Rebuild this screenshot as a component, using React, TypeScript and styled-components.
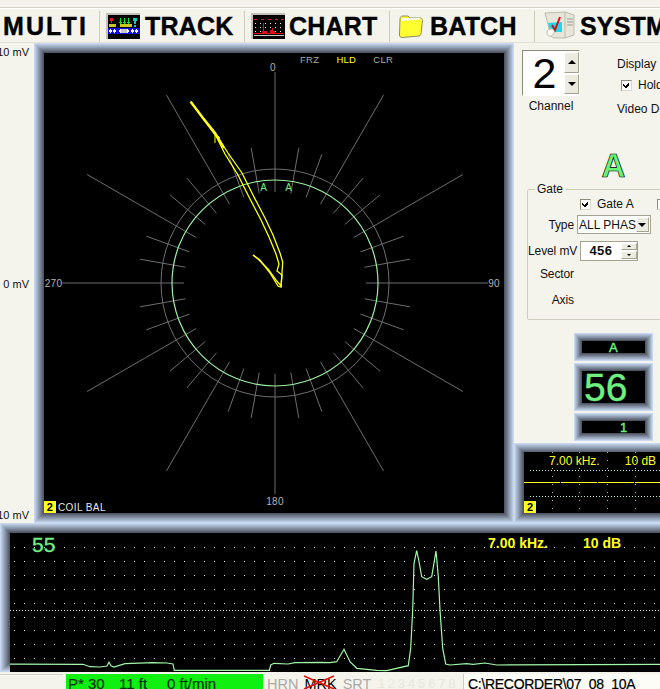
import React from 'react'
import styled, { createGlobalStyle } from 'styled-components'

const CREAM = '#f5f4ec'
const GREEN = '#70f080'
const YELLOW = '#ffff20'

const mix = (t: number) => {
  // light blue at the outer edge, slate at the inner edge
  const from = [200, 216, 240]
  const to = [78, 86, 100]
  const c = from.map((v, i) => Math.round(v + (to[i] - v) * t))
  return `rgb(${c.join(',')})`
}

const bevel = (size: number) =>
  Array.from({ length: size }, (_, i) => `inset 0 0 0 ${i + 1}px ${mix(i / (size - 1))}`).join(', ')

const GlobalStyle = createGlobalStyle`
  html, body {
    margin: 0;
    padding: 0;
    background: ${CREAM};
  }
  * {
    box-sizing: border-box;
  }
`

const Page = styled.div`
  width: 660px;
  height: 689px;
  overflow: hidden;
  display: flex;
  flex-direction: column;
  background: ${CREAM};
  font-family: 'Liberation Sans', Arial, sans-serif;
  color: #111;
`

const Toolbar = styled.div`
  height: 43px;
  flex: none;
  display: flex;
  align-items: center;
  padding-top: 10px;
  padding-bottom: 2px;
  white-space: nowrap;
  position: relative;
  border-top: 2px solid transparent;
  background: linear-gradient(#f5f4ec 0 5px, #d6d3c6 5px 6px, #fff 6px 7px, ${CREAM} 7px);
  border-bottom: 1px solid #e4e2d6;
`

const ToolItem = styled.div<{ $width: number; $pad: number; $gap: number }>`
  width: ${(p) => p.$width}px;
  height: 31px;
  flex: none;
  display: flex;
  align-items: center;
  gap: ${(p) => p.$gap}px;
  padding-left: ${(p) => p.$pad}px;
  border-right: 1px solid #cfccbe;
`

const ToolLabel = styled.span<{ $spacing?: number }>`
  font-size: 25px;
  font-weight: 700;
  letter-spacing: ${(p) => p.$spacing ?? 0.2}px;
  color: #000;
  -webkit-text-stroke: 0.4px #000;
`

const MainRow = styled.div`
  height: 480px;
  flex: none;
  display: flex;
`

const AxisColumn = styled.div`
  width: 34px;
  flex: none;
  display: flex;
  flex-direction: column;
  justify-content: space-between;
  align-items: flex-end;
  padding: 2px 5px 0 0;
  font-size: 11px;
  line-height: 14px;
  white-space: nowrap;
  margin-bottom: 1px;
`

const ScopePanel = styled.div`
  width: 480px;
  height: 480px;
  flex: none;
  padding: 10px;
  box-shadow: ${bevel(10)};
`

const Screen = styled.div`
  position: relative;
  width: 100%;
  height: 100%;
  background: #000;
  overflow: hidden;

  svg {
    display: block;
  }
`

const ModeRow = styled.div`
  position: absolute;
  top: 1px;
  left: 256px;
  display: flex;
  gap: 17px;
  font-size: 9.5px;
  line-height: 12px;
  letter-spacing: 0.3px;
`

const Mode = styled.span<{ $on?: boolean }>`
  color: ${(p) => (p.$on ? YELLOW : '#a8a8a8')};
`

const ChannelTag = styled.div`
  position: absolute;
  left: 0;
  bottom: 0;
  display: flex;
  align-items: center;
  gap: 2px;
  color: #e8e8e8;
  font-size: 10px;
  letter-spacing: 0.4px;
`

const Badge = styled.span`
  width: 12px;
  height: 12px;
  display: flex;
  align-items: center;
  justify-content: center;
  background: ${YELLOW};
  color: #000;
  font-size: 11px;
  font-weight: 700;
`

const Side = styled.div`
  width: 146px;
  flex: none;
  display: flex;
  flex-direction: column;
`

const TopControls = styled.div`
  display: flex;
  height: 106px;
  padding: 7px 0 0 8px;
`

const ChannelCol = styled.div`
  width: 58px;
  flex: none;
  display: flex;
  flex-direction: column;
  align-items: center;
`

const ChannelBox = styled.div`
  width: 58px;
  height: 46px;
  display: flex;
  background: #fff;
  border: 1px solid #8f8c7c;
  border-right-color: #fff;
  border-bottom-color: #fff;
`

const ChannelDigit = styled.span`
  flex: 1;
  text-align: center;
  font-size: 43px;
  line-height: 44px;
  padding-left: 2px;
  color: #000;
`

const SpinCol = styled.div<{ $w?: number }>`
  width: ${(p) => p.$w ?? 15}px;
  flex: none;
  display: flex;
  flex-direction: column;
  gap: 1px;
  padding: 1px 0;
`

const SpinBtn = styled.div`
  flex: 1;
  background: #ecebe0;
  border: 1px solid #fff;
  border-right-color: #a5a292;
  border-bottom-color: #a5a292;
  display: flex;
  align-items: center;
  justify-content: center;
  color: #000;
`

const Arrow = styled.span<{ $up?: boolean; $size?: number }>`
  width: 0;
  height: 0;
  border-left: ${(p) => p.$size ?? 4}px solid transparent;
  border-right: ${(p) => p.$size ?? 4}px solid transparent;
  ${(p) =>
    p.$up
      ? `border-bottom: ${p.$size ?? 4}px solid #000;`
      : `border-top: ${p.$size ?? 4}px solid #000;`}
`

const SmallLabel = styled.div`
  font-size: 12px;
  line-height: 14px;
`

const ChannelCaption = styled(SmallLabel)`
  margin-top: 3px;
`

const DisplayCol = styled.div`
  margin-left: 37px;
  padding-top: 7px;
  display: flex;
  flex-direction: column;
  white-space: nowrap;
`

const CheckRow = styled.div<{ $gap?: number }>`
  display: flex;
  align-items: center;
  gap: ${(p) => p.$gap ?? 6}px;
  font-size: 12px;
  line-height: 14px;
`

const HoldRow = styled(CheckRow)`
  margin: 7px 0 10px 4px;
`

const CheckFrame = styled.span`
  width: 11px;
  height: 11px;
  flex: none;
  background: #fff;
  border: 1px solid #8f8c7c;
  border-right-color: #dcdacd;
  border-bottom-color: #dcdacd;
  display: flex;
  align-items: center;
  justify-content: center;
`

const CheckBox = ({ checked }: { checked?: boolean }) => (
  <CheckFrame>
    {checked && (
      <svg width="9" height="9" viewBox="0 0 9 9" shapeRendering="crispEdges">
        <path d="M1 3h1v1h1v1h1V4h1V3h1V2h1v2H7v1H6v1H5v1H3V6H2V5H1z" fill="#000" />
      </svg>
    )}
  </CheckFrame>
)

const BigLetter = styled.div`
  height: 34px;
  text-align: center;
  padding-left: 53px;
  font-size: 33px;
  line-height: 34px;
  font-weight: 700;
  color: #6cf274;
  -webkit-text-stroke: 0.7px #000;
`

const GateBox = styled.fieldset`
  margin: 0 -20px 0 13px;
  height: 137px;
  padding: 0;
  border: 1px solid #cfccbe;
  border-radius: 2px;
  min-width: 0;
`

const GateLegend = styled.legend`
  margin-left: 7px;
  padding: 0 2px;
  font-size: 12px;
  line-height: 12px;
`

const GateGrid = styled.div`
  display: flex;
  flex-direction: column;
  padding-top: 2px;
  font-size: 12px;
`

const GateChecks = styled.div`
  display: flex;
  align-items: center;
  height: 14px;
  padding-left: 52px;
`

const GateSecond = styled.span`
  margin-left: 23px;
`

const GateRow = styled.div<{ $height: number }>`
  height: ${(p) => p.$height}px;
  display: flex;
  align-items: center;
`

const RowLabel = styled.span`
  width: 46px;
  flex: none;
  text-align: right;
  white-space: nowrap;
  letter-spacing: -0.1px;
`

const Select = styled.div`
  margin-left: 3px;
  width: 74px;
  height: 19px;
  display: flex;
  align-items: center;
  background: #fff;
  border: 1px solid #a5a292;
  padding-left: 1px;
  white-space: nowrap;
  justify-content: space-between;
`

const SelectBtn = styled.span`
  width: 16px;
  height: 15px;
  margin-right: 1px;
  background: #ecebe0;
  border: 1px solid #fff;
  border-right-color: #a5a292;
  border-bottom-color: #a5a292;
  display: flex;
  align-items: center;
  justify-content: center;
`

const LevelBox = styled.div`
  margin-left: 6px;
  width: 58px;
  height: 20px;
  display: flex;
  background: #fff;
  border: 1px solid #a5a292;
`

const LevelValue = styled.span`
  flex: 1;
  font-weight: 700;
  font-size: 13px;
  line-height: 18px;
  text-align: center;
  letter-spacing: 0.5px;
`

const Readouts = styled.div`
  flex: 1;
  display: flex;
  flex-direction: column;
  align-items: flex-end;
  gap: 2px;
  padding: 13px 7px 1px 0;
`

const Readout = styled.div<{ $height: number }>`
  width: 79px;
  height: ${(p) => p.$height}px;
  padding: 8px;
  box-shadow: ${bevel(8)};
`

const ReadoutFace = styled.div<{ $size: number; $indent: number }>`
  height: 100%;
  background: #000;
  color: ${GREEN};
  font-size: ${(p) => p.$size}px;
  display: flex;
  align-items: center;
  padding-left: ${(p) => p.$indent}px;
  line-height: 1;
  -webkit-text-stroke: 0.4px ${GREEN};
`

const MiniPanel = styled.div`
  height: 80px;
  flex: none;
  padding: 9px 0 10px 10px;
  box-shadow: ${bevel(10)};
  width: 156px;
`

const MiniLabels = styled.div`
  position: absolute;
  top: 2px;
  left: 25px;
  display: flex;
  gap: 25px;
  color: ${YELLOW};
  font-size: 12px;
  line-height: 14px;
  white-space: nowrap;
`

const TraceTag = styled.div`
  position: absolute;
  left: 0;
  bottom: 0;
`

const TracePanel = styled.div`
  height: 149px;
  flex: none;
  width: 680px;
  padding: 10px 0 0 10px;
  box-shadow: ${bevel(10)};
`

const TraceValue = styled.div`
  position: absolute;
  top: 0;
  left: 22px;
  color: ${GREEN};
  font-size: 21px;
  line-height: 24px;
  -webkit-text-stroke: 0.3px ${GREEN};
`

const TraceLabels = styled.div`
  position: absolute;
  top: 2px;
  left: 478px;
  display: flex;
  gap: 35px;
  color: ${YELLOW};
  font-size: 14px;
  font-weight: 700;
  line-height: 16px;
  white-space: nowrap;
`

const StatusBar = styled.div`
  height: 17px;
  flex: none;
  display: flex;
  align-items: flex-start;
  padding-top: 2px;
  white-space: nowrap;
  font-size: 15px;
  line-height: 20px;
`

const StatusBlank = styled.div`
  width: 63px;
  height: 15px;
  flex: none;
  border-top: 1px solid #d6d3c6;
`

const StatusGreen = styled.div`
  margin-left: 3px;
  width: 197px;
  flex: none;
  height: 16px;
  padding-left: 2px;
  background: #10f010;
  color: #04320a;
  display: flex;
  -webkit-text-stroke: 0.2px #04320a;
`

const StatusCell = styled.span<{ $width: number }>`
  width: ${(p) => p.$width}px;
  flex: none;
`

const StatusFlags = styled.div`
  margin-left: 4px;
  display: flex;
  gap: 6px;
  color: #a9a9a9;
  font-size: 14.5px;
  width: 196px;
  flex: none;
`

const CrossedFlag = styled.span`
  position: relative;
  color: #000;
`

const CrossOver = styled.svg`
  position: absolute;
  left: -1px;
  top: 1px;
`

const Numbers = styled.span`
  color: #e7e6dc;
  font-size: 13.5px;
  letter-spacing: 2.6px;
`

const PathBox = styled.div`
  flex: 1;
  height: 17px;
  padding-left: 4px;
  background: #fdfdf8;
  color: #000;
  border-left: 1px solid #cfccbe;
  font-size: 14px;
  letter-spacing: -0.3px;
  -webkit-text-stroke: 0.25px #000;
`

const TrackIcon = () => (
  <svg width="34" height="26" viewBox="0 0 34 26" shapeRendering="crispEdges">
    <rect width="34" height="26" fill="#c4c1b4" />
    <rect x="2" y="2" width="32" height="24" fill="#000" />
    <rect x="4" y="5" width="3" height="3" fill="#f01010" />
    <rect x="5" y="8" width="1" height="2" fill="#f01010" />
    {[14, 18, 22].map((x) => (
      <path key={x} d={`M${x} 5v4h-1l1.500 2 1.500-2h-1V5z`} fill="#10e030" />
    ))}
    <path d="M27 5h4v3h-1v3h-2V8h-1z" fill="#10c8c8" />
    <rect x="28" y="12" width="2" height="2" fill="#10c8c8" />
    <rect x="3" y="11" width="7" height="3" fill="#c8c820" />
    <rect x="14" y="11" width="12" height="3" fill="#c8c820" />
    <rect x="2" y="15" width="32" height="6" fill="#1010e0" />
    {[4, 8, 26, 30].map((x) => (
      <path key={x} d={`M${x - 2} 18l2-2 2 2-2 2z`} fill="#fff" />
    ))}
    <rect x="15" y="16" width="6" height="4" fill="#c8c8c8" />
    <path d="M12 18l3-2v4zM24 18l-3-2v4z" fill="#fff" />
  </svg>
)

const ChartIcon = () => (
  <svg width="34" height="26" viewBox="0 0 34 26" shapeRendering="crispEdges">
    <rect width="34" height="26" fill="#c4c1b4" />
    <rect x="2" y="2" width="32" height="24" fill="#000" />
    {[3, 10, 17, 24, 30].map((x) => (
      <rect key={x} x={x} y="6" width="3" height="1" fill="#e02020" />
    ))}
    {[4, 9, 14, 19, 24, 29].map((x) =>
      [10, 14, 18].map((y) => <rect key={`${x}-${y}`} x={x} y={y} width="1" height="1" fill="#eee" />),
    )}
    <path d="M3 20h8v-2h1v-8h1v8h3v2h3v-3h2v-2h1v3h2v2h8v1H3z" fill="#e01010" />
    <rect x="3" y="22" width="30" height="1" fill="#c8c8c8" />
  </svg>
)

const FolderIcon = () => (
  <svg width="26" height="26" viewBox="0 0 26 26">
    <path
      d="M2 6c0-2 1-3 3-3h5l2 2h10c1.500 0 2.500 1 2.500 2.500L23 21c-.2 1-1 1.800-2 2L4 24.500c-1.500 0-2.500-1-2.500-2.500z"
      fill="#ffff30"
      stroke="#8d8c60"
    />
    <path d="M3 8c0-1.500 1-3 2-3h17l1 1.500L5 8z" fill="#fdfbe0" />
  </svg>
)

const SystemIcon = () => (
  <svg width="32" height="30" viewBox="0 0 32 30">
    <path d="M1 2l20-1 9 3v20l-9 3H10l-3-2z" fill="#e8e6da" stroke="#bdbbad" />
    <path d="M21 1v26" stroke="#bdbbad" />
    <path d="M23 8h6M23 11h6M23 14h6" stroke="#9c9b8e" />
    <path d="M4 12l14-1v10H6z" fill="#20d8e8" />
    <path d="M3 21c0-2 2-3 4-3 3 0 4 2 3 4s-3 4-5 3-2-2-2-4z" fill="#fbfbf4" stroke="#bdbbad" />
    <path d="M8 14l3 5 5-13" fill="none" stroke="#c81414" strokeWidth="2" />
  </svg>
)

const CENTER_X = 231
const CENTER_Y = 230

const polar = (deg: number, r: number) => {
  const a = (deg * Math.PI) / 180
  return [CENTER_X + r * Math.sin(a), CENTER_Y - r * Math.cos(a)]
}

// page coordinates of the impedance trace, moved into the screen below
const OUTER_TRACE =
  '190.700,101.700 203,118 215,133 228,153 242,173 253,195 265,218 273,235 280,253 282.700,262 282,273 281,287 278,286 270,273 260,260 253,255'
const INNER_TRACE =
  '190.700,101.700 204,120 216,136 225,154 238,175 249,197 261,220 269,237 276,254 279,264 277,271 282,275 281,286 276,280 268,269 258,259 253,255'

const toScreen = (points: string) =>
  points
    .split(' ')
    .map((p) => {
      const [x, y] = p.split(',').map(Number)
      return `${x - 44},${y - 53}`
    })
    .join(' ')

const angles = Array.from({ length: 36 }, (_, i) => i * 10)

const PolarPlot = () => (
  <svg width="460" height="460" viewBox="0 0 460 460" fontFamily="'Liberation Sans', Arial, sans-serif">
    {angles.map((deg) => {
      const long = deg % 30 === 0
      const [x1, y1] = polar(deg, 91)
      const [x2, y2] = polar(deg, deg % 180 === 0 ? 211 : deg % 90 === 0 ? 213 : long ? 217 : 137)
      return <line key={deg} x1={x1} y1={y1} x2={x2} y2={y2} stroke="#6e6e6e" strokeWidth="1" />
    })}
    <circle cx={CENTER_X} cy={CENTER_Y} r="114" fill="none" stroke="#6e6e6e" />
    <circle cx={CENTER_X} cy={CENTER_Y} r="103" fill="none" stroke="#9cf2a4" strokeWidth="1.200" />
    <polyline points={toScreen(INNER_TRACE)} fill="none" stroke={YELLOW} strokeWidth="1.300" />
    <polyline points={toScreen(OUTER_TRACE)} fill="none" stroke={YELLOW} strokeWidth="1.300" />
    <polyline points="146.700,48.700 159,65 171,80 180,95" fill="none" stroke={YELLOW} strokeWidth="2.400" />
    <path d="M171 80v10M171 80l5 5" stroke={YELLOW} fill="none" />
    <g fontSize="10" fill="#b4b4b4" textAnchor="middle" letterSpacing="0.3">
      <text x="229" y="18">0</text>
      <text x="9.500" y="234">270</text>
      <text x="450" y="234">90</text>
      <text x="231" y="452">180</text>
    </g>
    <g fontSize="10" fill={GREEN} textAnchor="middle">
      <text x="219.500" y="138">A</text>
      <text x="244.500" y="138">A</text>
    </g>
  </svg>
)

const miniVerticals = [28, 55, 83, 111]

const MiniPlot = () => (
  <svg width="146" height="61" viewBox="0 0 146 61" shapeRendering="crispEdges">
    {miniVerticals.map((x) => (
      <line key={x} x1={x} y1="0" x2={x} y2="61" stroke="#bcbcbc" strokeDasharray="1 7" />
    ))}
    <line x1="6" y1="18.500" x2="146" y2="18.500" stroke="#b8f4bc" strokeDasharray="1 2" />
    <line x1="6" y1="44.500" x2="146" y2="44.500" stroke="#b8f4bc" strokeDasharray="1 2" />
    <line x1="0" y1="30.500" x2="146" y2="30.500" stroke={YELLOW} strokeDasharray="36 1" />
  </svg>
)

const gridRows = [547, 561, 575, 589, 603, 617, 630, 644, 658]

const TRACE =
  '0,664 83,664.300 90,666.700 100,667 107,666 109,662.300 111,665.700 114,667 125,663.700 153,662.700 167,663 173,664 174.300,670.300 269.300,670.300 270.700,665 274,663.300 288,664 295,662.700 320,662.300 330,662.700 336.700,661.700 344,649.300 350,661.700 356.700,668.300 376.700,670.300 386.700,670.700 408.300,665.700 410.700,648.300 412.700,610 414,563.300 416.700,550.700 418.700,560 421.700,576.700 426.700,579.300 431.700,576.700 436,551 438.300,576.700 440,610 442.700,648.300 445.700,664 450,665 466.700,663.700 473,664.300 485,663 496.700,665 660,664.300'

const traceOnScreen = TRACE.split(' ')
  .map((p) => {
    const [x, y] = p.split(',').map(Number)
    return `${x - 10},${y - 533}`
  })
  .join(' ')

const TracePlot = () => (
  <svg width="670" height="139" viewBox="0 0 670 139">
    {gridRows.map((y) => (
      <line
        key={y}
        x1="4"
        y1={y - 533 + 0.5}
        x2="670"
        y2={y - 533 + 0.5}
        stroke="#e8e8e8"
        strokeDasharray="1 9"
        shapeRendering="crispEdges"
      />
    ))}
    <line x1="0" y1="77.500" x2="670" y2="77.500" stroke="#d0f4d4" strokeDasharray="1 2" shapeRendering="crispEdges" />
    <polyline points={traceOnScreen} fill="none" stroke="#a0f8a8" strokeWidth="1.200" />
  </svg>
)

const App = () => {
  return (
    <Page>
      <GlobalStyle />
      <Toolbar>
        <ToolItem $width={100} $pad={3} $gap={0}>
          <ToolLabel $spacing={2.1}>MULTI</ToolLabel>
        </ToolItem>
        <ToolItem $width={145} $pad={6} $gap={5}>
          <TrackIcon />
          <ToolLabel>TRACK</ToolLabel>
        </ToolItem>
        <ToolItem $width={145} $pad={6} $gap={4}>
          <ChartIcon />
          <ToolLabel>CHART</ToolLabel>
        </ToolItem>
        <ToolItem $width={145} $pad={8} $gap={6}>
          <FolderIcon />
          <ToolLabel>BATCH</ToolLabel>
        </ToolItem>
        <ToolItem $width={145} $pad={9} $gap={4}>
          <SystemIcon />
          <ToolLabel>SYSTM</ToolLabel>
        </ToolItem>
      </Toolbar>

      <MainRow>
        <AxisColumn>
          <span>10 mV</span>
          <span>0 mV</span>
          <span>10 mV</span>
        </AxisColumn>
        <ScopePanel>
          <Screen>
            <PolarPlot />
            <ModeRow>
              <Mode>FRZ</Mode>
              <Mode $on>HLD</Mode>
              <Mode>CLR</Mode>
            </ModeRow>
            <ChannelTag>
              <Badge>2</Badge>
              <span>COIL BAL</span>
            </ChannelTag>
          </Screen>
        </ScopePanel>
        <Side>
          <TopControls>
            <ChannelCol>
              <ChannelBox>
                <ChannelDigit>2</ChannelDigit>
                <SpinCol>
                  <SpinBtn>
                    <Arrow $up />
                  </SpinBtn>
                  <SpinBtn>
                    <Arrow />
                  </SpinBtn>
                </SpinCol>
              </ChannelBox>
              <ChannelCaption>Channel</ChannelCaption>
            </ChannelCol>
            <DisplayCol>
              <SmallLabel>Display Style</SmallLabel>
              <HoldRow>
                <CheckBox checked />
                <span>Hold</span>
              </HoldRow>
              <SmallLabel>Video Delay</SmallLabel>
            </DisplayCol>
          </TopControls>
          <BigLetter>A</BigLetter>
          <GateBox>
            <GateLegend>Gate</GateLegend>
            <GateGrid>
              <GateChecks>
                <CheckRow>
                  <CheckBox checked />
                  <span>Gate A</span>
                </CheckRow>
                <GateSecond>
                  <CheckBox />
                </GateSecond>
              </GateChecks>
              <GateRow $height={27}>
                <RowLabel>Type</RowLabel>
                <Select>
                  <span>ALL PHAS</span>
                  <SelectBtn>
                    <Arrow />
                  </SelectBtn>
                </Select>
              </GateRow>
              <GateRow $height={25}>
                <RowLabel>Level mV</RowLabel>
                <LevelBox>
                  <LevelValue>456</LevelValue>
                  <SpinCol $w={16}>
                    <SpinBtn>
                      <Arrow $up $size={2} />
                    </SpinBtn>
                    <SpinBtn>
                      <Arrow $size={2} />
                    </SpinBtn>
                  </SpinCol>
                </LevelBox>
              </GateRow>
              <GateRow $height={22}>
                <RowLabel>Sector</RowLabel>
              </GateRow>
              <GateRow $height={30}>
                <RowLabel>Axis</RowLabel>
              </GateRow>
            </GateGrid>
          </GateBox>
          <Readouts>
            <Readout $height={28}>
              <ReadoutFace $size={13} $indent={27}>A</ReadoutFace>
            </Readout>
            <Readout $height={48}>
              <ReadoutFace $size={39} $indent={2}>56</ReadoutFace>
            </Readout>
            <Readout $height={28}>
              <ReadoutFace $size={13} $indent={38}>1</ReadoutFace>
            </Readout>
          </Readouts>
          <MiniPanel>
            <Screen>
              <MiniPlot />
              <MiniLabels>
                <span>7.00 kHz.</span>
                <span>10 dB</span>
              </MiniLabels>
              <TraceTag>
                <Badge>2</Badge>
              </TraceTag>
            </Screen>
          </MiniPanel>
        </Side>
      </MainRow>

      <TracePanel>
        <Screen>
          <TracePlot />
          <TraceValue>55</TraceValue>
          <TraceLabels>
            <span>7.00 kHz.</span>
            <span>10 dB</span>
          </TraceLabels>
        </Screen>
      </TracePanel>

      <StatusBar>
        <StatusBlank />
        <StatusGreen>
          <StatusCell $width={51}>P* 30</StatusCell>
          <StatusCell $width={48}>11 ft</StatusCell>
          <StatusCell $width={95}>0 ft/min</StatusCell>
        </StatusGreen>
        <StatusFlags>
          <span>HRN</span>
          <CrossedFlag>
            MRK
            <CrossOver width="32" height="15" viewBox="0 0 32 15">
              <path d="M1 1l30 13M1 14L31 1" stroke="#e01010" strokeWidth="1.500" />
            </CrossOver>
          </CrossedFlag>
          <span>SRT</span>
          <Numbers>12345678</Numbers>
        </StatusFlags>
        <PathBox>C:\RECORDER\07_08_10A</PathBox>
      </StatusBar>
    </Page>
  )
}

export default App
